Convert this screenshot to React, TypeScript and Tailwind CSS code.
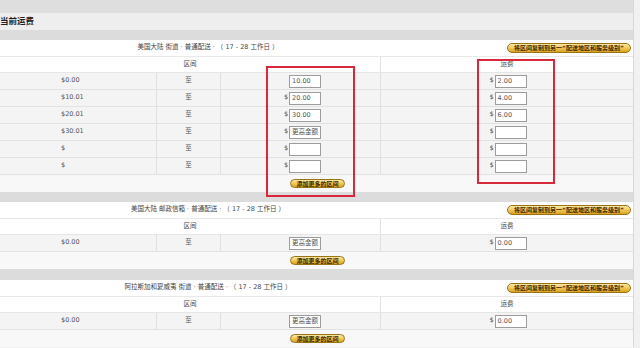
import React from 'react';

type Row = { from: string; to: string; toDollar: boolean; fee: string };

const font = 'font-["DejaVu_Sans","Noto_Sans_CJK_SC",sans-serif]';

function GoldButton({ label, className }: { label: string; className: string }) {
  return (
    <span
      className={`flex items-center justify-center rounded-full border border-[#9a7414] bg-gradient-to-b from-[#fbe9a6] via-[#f0c955] to-[#d7a21f] text-[6px] leading-none font-bold text-[#3c2a06] whitespace-nowrap ${className}`}
    >
      {label}
    </span>
  );
}

function Box({ value }: { value: string }) {
  return (
    <span className="flex h-[13px] w-[32px] items-center border border-[#9c9c9c] bg-white pl-[2px] text-[6.5px] leading-none text-[#555] whitespace-nowrap overflow-hidden">
      {value}
    </span>
  );
}

function Section({ title, rows }: { title: string; rows: Row[] }) {
  return (
    <div className="bg-white">
      <div className="flex h-[17px] items-center border-b border-[#e8e8e8]">
        <div className="w-[416px] text-center text-[6.5px] text-[#444]">{title}</div>
        <div className="flex flex-1 justify-end pr-[2px]">
          <GoldButton label="将区间复制到另一“配送地区和服务级别”" className="h-[10px] w-[124px]" />
        </div>
      </div>
      <div className="flex h-[16px] items-center border-b border-[#e6e6e6] text-[6.5px] text-[#444]">
        <div className="flex h-full w-[381px] items-center justify-center border-r border-[#e0e0e0]">区间</div>
        <div className="flex-1 text-center">运费</div>
      </div>
      {rows.map((r, i) => (
        <div key={i} className="flex h-[17px] items-stretch border-b border-[#e2e2e2] bg-[#f4f4f4] text-[6.5px] text-[#555]">
          <div className="flex w-[157px] items-center border-r border-[#e0e0e0] pl-[61px]">{r.from}</div>
          <div className="flex w-[64px] items-center justify-center border-r border-[#e0e0e0]">至</div>
          <div className="flex w-[160px] items-center justify-center border-r border-[#e0e0e0] pl-[4px]">
            <span className={`mr-[1px] ${r.toDollar ? '' : 'invisible'}`}>$</span>
            <Box value={r.to} />
          </div>
          <div className="flex flex-1 items-center justify-center pl-[2px]">
            <span className="mr-[1px]">$</span>
            <Box value={r.fee} />
          </div>
        </div>
      ))}
      <div className="flex h-[17px] items-center bg-[#f8f8f8] pl-[290px]">
        <GoldButton label="添加更多的区间" className="h-[9px] w-[55px]" />
      </div>
    </div>
  );
}

const first: Row[] = [
  { from: '$0.00', to: '10.00', toDollar: false, fee: '2.00' },
  { from: '$10.01', to: '20.00', toDollar: true, fee: '4.00' },
  { from: '$20.01', to: '30.00', toDollar: true, fee: '6.00' },
  { from: '$30.01', to: '更高金额', toDollar: true, fee: '' },
  { from: '$', to: '', toDollar: true, fee: '' },
  { from: '$', to: '', toDollar: true, fee: '' },
];

const single: Row[] = [{ from: '$0.00', to: '更高金额', toDollar: false, fee: '0.00' }];

export default function App() {
  return (
    <div className={`relative h-[348px] w-[640px] overflow-hidden bg-[#f1f1f1] ${font}`}>
      <div className="w-[634px] border-r border-[#d8d8d8]">
        <div className="h-[13px] bg-[#dedede]" />
        <div className="flex h-[17px] items-center bg-[#eeeeee] text-[8.5px] font-bold text-[#222]">当前运费</div>
        <div className="h-[10px] bg-[#dcdcdc]" />
        <Section title="美国大陆 街道 · 普通配送 · （ 17 - 28 工作日 ）" rows={first} />
        <div className="h-[10px] bg-[#dcdcdc]" />
        <Section title="美国大陆 邮政信箱 · 普通配送 · （ 17 - 28 工作日 ）" rows={single} />
        <div className="h-[11px] bg-[#dcdcdc]" />
        <Section title="阿拉斯加和夏威夷 街道 · 普通配送 · （ 17 - 28 工作日 ）" rows={single} />
      </div>
      {/* red annotation boxes */}
      <div className="absolute left-[266px] top-[66px] h-[131px] w-[89px] border-2 border-[#d8283c]" />
      <div className="absolute left-[477px] top-[59px] h-[125px] w-[78px] border-2 border-[#d8283c]" />
    </div>
  );
}
